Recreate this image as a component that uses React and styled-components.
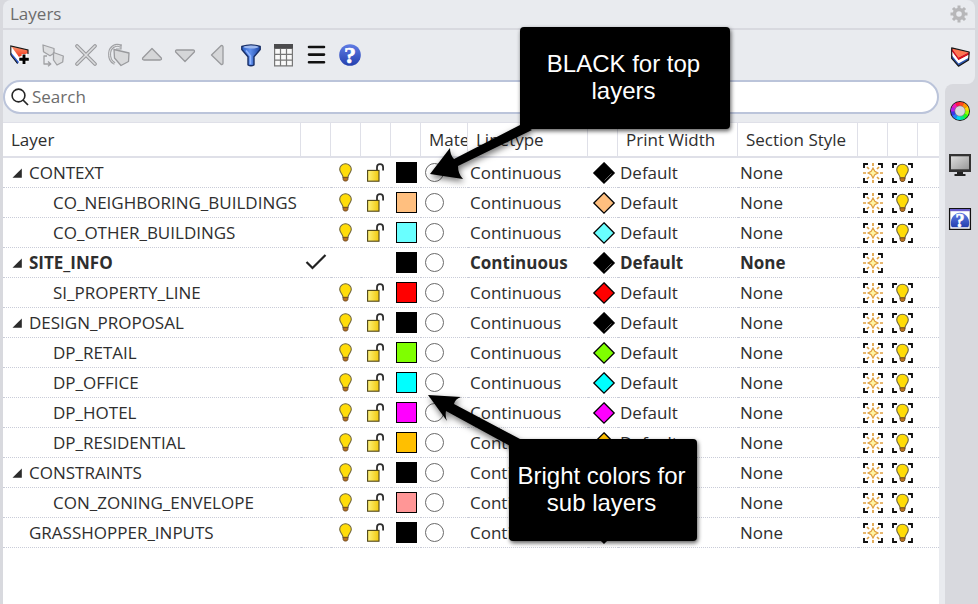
import React from "react";
import styled, { createGlobalStyle } from "styled-components";

const ink = "#2e2e2e";
const chrome = "#e9ebef";
const frame = "#d8d9de";

const GlobalStyle = createGlobalStyle`
  *, *::before, *::after { box-sizing: border-box; }
  body { margin: 0; background: ${frame}; color: ${ink}; font: 17px/24px "Open Sans", "Noto Sans", sans-serif; }
  button, input { font: inherit; color: inherit; }
`;

const Screen = styled.div`
  position: relative;
  min-height: 100vh;
  padding: 0 3px;
  display: flex;
  overflow: hidden;
`;

const Panel = styled.section`
  flex: 1;
  min-width: 0;
  display: flex;
  flex-direction: column;
  background: ${chrome};
  border-radius: 8px 8px 0 0;
`;

const TitleBar = styled.header`
  height: 30px;
  padding: 0 7px;
  display: flex;
  align-items: center;
  justify-content: space-between;
  border-bottom: 2px solid #d8d9df;
`;

const Title = styled.h1`
  margin: 0;
  font-size: 17px;
  font-weight: 400;
  line-height: 24px;
  color: #6c6c6c;
`;

const IconButton = styled.button`
  flex: none;
  width: ${(p) => p.$width || 33}px;
  height: ${(p) => p.$height || 30}px;
  padding: 0;
  border: 0;
  background: none;
  display: flex;
  align-items: center;
  justify-content: center;

  svg { display: block; overflow: visible; }
`;

const Body = styled.div`
  flex: 1;
  min-height: 0;
  display: flex;
`;

const Main = styled.main`
  flex: 1;
  min-width: 0;
  margin-right: 6px;
  display: flex;
  flex-direction: column;
`;

const Toolbar = styled.div`
  height: 50px;
  display: flex;
  align-items: center;
`;

const SearchBox = styled.label`
  height: 34px;
  margin-bottom: 8px;
  padding: 0 6px;
  display: flex;
  align-items: center;
  gap: 3px;
  background: #fff;
  border: 2px solid #bbc4da;
  border-radius: 17px;
`;

const SearchInput = styled.input`
  flex: 1;
  min-width: 0;
  padding: 0;
  border: 0;
  outline: 0;
  background: none;
  &::placeholder { color: #6c6c6c; opacity: 1; }
`;

const TableArea = styled.div`
  flex: 1;
  overflow: hidden;
  background: #fff;
  border-top: 1px solid #dfe0e8;
`;

const Table = styled.table`
  width: 100%;
  table-layout: fixed;
  border-collapse: separate;
  border-spacing: 0;
`;

const Col = styled.col`
  width: ${(p) => (p.$width ? `${p.$width}px` : "auto")};
`;

const HeadCell = styled.th`
  height: 35px;
  padding: 0 0 0 8px;
  font-weight: 400;
  text-align: left;
  white-space: nowrap;
  overflow: hidden;
  border-right: 1px solid #dfe0e8;
  border-bottom: 2px solid #dfe0e8;
  &:last-child { border-right: 0; }
`;

const Row = styled.tr`
  font-weight: ${(p) => (p.$current ? 700 : 400)};
`;

const Cell = styled.td`
  height: 30px;
  padding: 0 0 0 ${(p) => p.$pad || 0}px;
  line-height: 24px;
  white-space: nowrap;
  border-bottom: 1px dotted #c9ccd8;
`;

const LayerName = styled.div`
  display: flex;
  align-items: center;
  padding-left: ${(p) => (p.$child ? 50 : p.$leaf ? 26 : 6)}px;
`;

const Expander = styled(IconButton).attrs({ $width: 20, $height: 24 })`
  justify-content: flex-start;
  padding-left: 3px;
`;

const Swatch = styled.button`
  display: block;
  width: 21px;
  height: 21px;
  margin-left: 5px;
  padding: 0;
  border: 1px solid #000;
  background: ${(p) => p.$color};
`;

const Material = styled.button`
  display: block;
  width: 19px;
  height: 19px;
  margin-left: 4px;
  padding: 0;
  border: 1px solid #6a6a6a;
  border-radius: 50%;
  background: #fff;
`;

const SideTabs = styled.nav`
  flex: none;
  width: 30px;
`;

const ActiveSlot = styled.div`
  background: ${frame};
`;

const SideTab = styled(IconButton).attrs({ $width: 30, $height: 54 })`
  background: ${(p) => (p.$active ? chrome : "none")};
  border-radius: 0 0 8px 0;
`;

const IdleTabs = styled.div`
  height: calc(100% - 54px);
  background: ${frame};
  border-radius: 8px 0 0 0;
`;

const Arrows = styled.svg`
  position: absolute;
  left: 0;
  top: 0;
  pointer-events: none;
  filter: drop-shadow(1px 3px 3px rgba(0, 0, 0, 0.55));
`;

const Callout = styled.aside`
  position: absolute;
  left: ${(p) => p.$x}px;
  top: ${(p) => p.$y}px;
  width: ${(p) => p.$width}px;
  padding: 23px 6px 25px 3px;
  border-radius: 4px;
  background: #000;
  color: #fff;
  font: 24px/27px "Liberation Sans", Arial, sans-serif;
  text-align: center;
  box-shadow: 1px 2px 4px rgba(0, 0, 0, 0.65);
`;

const Glyph = styled.text`
  font: 700 ${(p) => p.$size}px "Liberation Serif", serif;
  text-anchor: middle;
  fill: #fff;
  stroke: #fff;
  stroke-width: 0.6px;
`;

const Icon = ({ w, h, children }) => (
  <svg width={w} height={h} viewBox={`0 0 ${w} ${h}`} fill="none" aria-hidden="true">
    {children}
  </svg>
);

const BulbShape = () => (
  <>
    <path
      d="M6.500.700C3.300.700.700 3.200.700 6.200c0 2.600 1.700 4 2.700 6 .5 1 .6 1.800.6 2.500h5c0-.7.1-1.500.6-2.500 1-2 2.700-3.400 2.700-6C12.300 3.200 9.700.700 6.500.700Z"
      fill="#ffdc08" stroke="#6f6642" strokeWidth="1.100"
    />
    <path d="M4.200 14.300h4.600v2.400L7.700 18H5.300l-1.100-1.300Z" fill="#b8741f" stroke="#69451f" strokeWidth=".9" />
  </>
);

const BulbIcon = () => <Icon w={13} h={19}><BulbShape /></Icon>;

const LockIcon = () => (
  <Icon w={17} h={19}>
    <path d="M10 7.500V4.300C10 2.300 11.300 1.100 13 1.100s3.100 1.200 3.100 3.200V7.500" stroke="#2e2e2e" strokeWidth="1.800" />
    <rect x=".6" y="7.400" width="11.400" height="10.800" fill="url(#lockFill)" stroke="#4d4417" strokeWidth="1.100" />
  </Icon>
);

const NewSunIcon = () => (
  <Icon w={20} h={20}>
    <path d="M1 5V1h4M15 1h4v4M19 15v4h-4M5 19H1v-4" stroke="#111" strokeWidth="1.900" />
    <path
      d="M10 0v3M10 17v3M0 10h3M17 10h3M4 4l2 2M14 14l2 2M16 4l-2 2M6 14l-2 2"
      stroke="#dfa040" strokeWidth="1.700"
    />
    <path d="M10 5 11.800 8.200 15 10 11.800 11.800 10 15 8.200 11.800 5 10 8.200 8.200Z" fill="#fff5a5" stroke="#dfa040" strokeWidth="1.200" />
  </Icon>
);

const NewBulbIcon = () => (
  <Icon w={21} h={20}>
    <path d="M1 5V1h4M16 1h4v4M20 15v4h-4M5 19H1v-4" stroke="#111" strokeWidth="1.900" />
    <g transform="translate(4 .500)"><BulbShape /></g>
  </Icon>
);

const CheckIcon = () => (
  <Icon w={22} h={18}>
    <path d="M1.500 8 7.500 14 20.500 1" stroke="#222" strokeWidth="2.200" />
  </Icon>
);

const DiamondIcon = ({ color }) => (
  <Icon w={22} h={22}>
    <path d="M12 .800 22.200 11 12 21.200 1.800 11Z" fill={color} stroke="#000" strokeWidth="1.300" />
    {color === "#000000" && <path d="m12.500 18.500 7-7" stroke="#777" strokeWidth=".8" />}
  </Icon>
);

const ExpanderIcon = () => <Icon w={10} h={10}><path d="M9.800.500v9.300H.500Z" fill="#2b2b2b" /></Icon>;

const GearIcon = () => (
  <Icon w={18} h={18}>
    <circle cx="9" cy="9" r="4.500" stroke="#b7b7b9" strokeWidth="3.400" />
    {[0, 45, 90, 135].map((a) => (
      <path key={a} d="M9 .500v3M9 14.500v3" stroke="#b7b7b9" strokeWidth="3" transform={`rotate(${a} 9 9)`} />
    ))}
  </Icon>
);

const NewLayerIcon = () => (
  <Icon w={20} h={20}>
    <path d="M1 1v8l6.500 9.500L17 13V5Z" fill="#fff" />
    <path d="M1 1 18 5v3L9 12Z" fill="url(#redFill)" />
    <path d="M1 7.500 9 17l-1.500 2L1 10Z" fill="#315ed0" />
    <path d="M.800 10V1l17.200 4v4M.800 10l6.700 8.500" stroke="#151515" strokeWidth="1.100" />
    <path d="M14 9v10M9 14h10" stroke="#fff" strokeWidth="4.600" />
    <path d="M14 9.500v9.500M9.300 14.200h9.500" stroke="#000" strokeWidth="2.900" />
  </Icon>
);

const SubLayerIcon = () => (
  <Icon w={22} h={22}>
    <g stroke="#a0a1a4" strokeWidth="1.300" fill="#dedfe1" strokeLinejoin="round">
      <path d="m1 1 11 3.500v4.800l-4 2.500-6.500-4Z" />
      <path d="m11.500 8.500 9.800 3.500-.6 6-5.700 3-3.500-5Z" />
      <path d="M5 12H2v8h6M6 17.500 8.800 20 6 22.300" fill="none" />
    </g>
  </Icon>
);

const DeleteIcon = () => (
  <Icon w={22} h={22}>
    <path d="m2 2 18 18M20 2 2 20" stroke="#999a9d" strokeWidth="3.800" strokeLinecap="round" />
    <path d="m2 2 18 18M20 2 2 20" stroke="#dcdddf" strokeWidth="1.600" strokeLinecap="round" />
  </Icon>
);

const DuplicateIcon = () => (
  <Icon w={22} h={22}>
    <path d="M13 2.500C8-.500 2 3 1.600 9c-.4 5 1.800 9 5.200 10.500" stroke="#a0a1a4" strokeWidth="3" />
    <path d="M13 2.500C8-.500 2 3 1.600 9c-.4 5 1.800 9 5.200 10.500" stroke="#e1e2e4" strokeWidth="1" />
    <path d="M13 0v5H8" stroke="#a0a1a4" strokeWidth="1.200" />
    <path d="m6 5.500 15 3.500-.5 8.500-7.500 4-6.500-7.500Z" fill="#d8d9db" stroke="#999a9d" strokeWidth="1.300" strokeLinejoin="round" />
  </Icon>
);

const TriangleIcon = ({ angle }) => (
  <Icon w={20} h={20}>
    <path d="M10 3.500 19.300 13Q20 15 18 15H2Q0 15 .700 13Z" fill="#d5d6d8" stroke="#999a9d" strokeWidth="1.300" strokeLinejoin="round" transform={`rotate(${angle} 10 10)`} />
  </Icon>
);

const FilterIcon = () => (
  <Icon w={20} h={23}>
    <path d="M.800 2.500Q10-.500 19.200 2.500v3l-6.200 7.300v8q-3 2-6 0v-8L.800 5.500Z" fill="url(#funnelFill)" stroke="#182e66" strokeWidth="1.400" strokeLinejoin="round" />
    <ellipse cx="10" cy="3" rx="7.600" ry="1.500" fill="#9db8ee" />
    <path d="m5 6.500 4.500 5.500v8" stroke="#93b6ff" strokeWidth="1.500" />
  </Icon>
);

const GridIcon = () => (
  <Icon w={19} h={23}>
    <path d="M.600.600h17.800v21.300H.600Z" fill="#f9f9f9" stroke="#777" strokeWidth="1.200" />
    <path d="M.600 4.500h17.800M.600 10.300h17.800M.600 16.200h17.800M6.500 4v18M12.500 4v18" stroke="#777" strokeWidth="1.200" />
    <path d="M0 0h19v4.500H0Z" fill="#4b4b4d" />
  </Icon>
);

const MenuIcon = () => (
  <Icon w={20} h={20}>
    <path d="M2 2h15M2 9.600h15M2 17.200h15" stroke="#111" strokeWidth="2.600" strokeLinecap="round" />
  </Icon>
);

const HelpIcon = () => (
  <Icon w={22} h={22}>
    <circle cx="11" cy="11" r="10.800" fill="url(#helpFill)" />
    <Glyph $size={24} x="11" y="19">?</Glyph>
  </Icon>
);

const SearchIcon = () => (
  <Icon w={18} h={18}>
    <circle cx="7.500" cy="7.500" r="6.400" stroke="#252525" strokeWidth="1.600" />
    <path d="m12 12 5 5" stroke="#252525" strokeWidth="1.700" />
  </Icon>
);

const LayersTabIcon = () => (
  <Icon w={19} h={20}>
    <path d="M.700.900 18.200 5 7.500 10.500Z" fill="#ff7650" />
    <path d="M.700.900v3.300l6.800 9L18 7.700 18.200 5 7.500 10.500Z" fill="#d5141c" />
    <path d="M.700 4.200v4l6.800 8.300 10.300-5.700.2-3.100-10.500 5.500Z" fill="#fff" />
    <path d="M.700 8.200v3.200l6.800 7.800 10.100-6.200.2-2.200-10.300 5.700Z" fill="#2d57b0" />
    <path d="M.700.900 18.200 5l-.6 8-10.100 6.200L.700 11.400Z" stroke="#151515" strokeWidth="1.200" strokeLinejoin="round" />
  </Icon>
);

const hues = ["#ffd800", "#95ff00", "#20f520", "#00e98b", "#00d9ed", "#247ef6", "#3c35e9", "#b61ee6", "#f01bb5", "#ff164d", "#ff481f", "#ff9600"];
const WheelIcon = () => (
  <Icon w={20} h={20}>
    <circle cx="10" cy="10" r="10" fill="#181818" />
    {hues.map((c, i) => (
      <path key={c} d="M10 10 12.700 1.300A9.100 9.100 0 0 1 17.100 4.300Z" fill={c} transform={`rotate(${i * 30 + 40} 10 10)`} />
    ))}
    <circle cx="10" cy="10" r="5.200" fill={frame} stroke="#666" strokeWidth=".5" />
  </Icon>
);

const MonitorIcon = () => (
  <Icon w={22} h={22}>
    <path d="M0 0h22v18H0Z" fill="#333" />
    <path d="M2 2.300h18v13H2Z" fill="url(#screenFill)" />
    <path d="M8 18h6v2h2.500v2h-11v-2H8Z" fill="#222" />
  </Icon>
);

const HelpWindowIcon = () => (
  <Icon w={22} h={22}>
    <path d="M.600.600h20.800v20.800H.600Z" fill="#fff" stroke="#111" strokeWidth="1.300" />
    <path d="M1 1h20v2.200H1Z" fill="#6a5ccb" />
    <path d="M2.700 19.200C1.300 16.500 1.500 12 3.500 9 7.500 3.300 14.500 3.300 18.500 9c2 3 2.200 7.500.8 10.200Z" fill="url(#helpFill)" />
    <Glyph $size={18} x="11" y="18.500">?</Glyph>
  </Icon>
);

const Gradients = () => (
  <defs>
    <linearGradient id="lockFill"><stop stopColor="#fff37c" /><stop offset="1" stopColor="#f1c80c" /></linearGradient>
    <linearGradient id="redFill" x1="0" y1="0" x2="0" y2="1"><stop stopColor="#ff9971" /><stop offset="1" stopColor="#ed351b" /></linearGradient>
    <linearGradient id="funnelFill"><stop stopColor="#2d62c6" /><stop offset=".45" stopColor="#5f8fec" /><stop offset="1" stopColor="#1f48a8" /></linearGradient>
    <linearGradient id="helpFill" x1="0" y1="0" x2="0" y2="1"><stop stopColor="#607ce4" /><stop offset="1" stopColor="#2440af" /></linearGradient>
    <linearGradient id="screenFill" x1="0" y1="0" x2="1" y2="1"><stop stopColor="#dedede" /><stop offset="1" stopColor="#999" /></linearGradient>
  </defs>
);

const tools = [
  ["New layer", <NewLayerIcon />],
  ["New sublayer", <SubLayerIcon />],
  ["Delete layer", <DeleteIcon />],
  ["Duplicate layer", <DuplicateIcon />],
  ["Move up", <TriangleIcon angle={0} />],
  ["Move down", <TriangleIcon angle={180} />],
  ["Move out", <TriangleIcon angle={-90} />],
  ["Filter", <FilterIcon />],
  ["Columns", <GridIcon />],
  ["Menu", <MenuIcon />],
  ["Help", <HelpIcon />],
];

const columns = [
  ["Layer", 298], ["", 30], ["", 30], ["", 30], ["", 30], ["Material", 47], ["Linetype", 120],
  ["", 30], ["Print Width", 120], ["Section Style", 120], ["", 30], ["", 30], ["", 0],
];

const layers = [
  { name: "CONTEXT", color: "#000000" },
  { name: "CO_NEIGHBORING_BUILDINGS", color: "#ffbf7f", child: true },
  { name: "CO_OTHER_BUILDINGS", color: "#69ffff", child: true },
  { name: "SITE_INFO", color: "#000000", current: true },
  { name: "SI_PROPERTY_LINE", color: "#ff0000", child: true },
  { name: "DESIGN_PROPOSAL", color: "#000000" },
  { name: "DP_RETAIL", color: "#7fff00", child: true },
  { name: "DP_OFFICE", color: "#00ffff", child: true },
  { name: "DP_HOTEL", color: "#ff00ff", child: true },
  { name: "DP_RESIDENTIAL", color: "#ffbf00", child: true },
  { name: "CONSTRAINTS", color: "#000000" },
  { name: "CON_ZONING_ENVELOPE", color: "#ff9696", child: true },
  { name: "GRASSHOPPER_INPUTS", color: "#000000", leaf: true },
];

const Action = ({ label, children }) => (
  <IconButton $width={29} $height={24} aria-label={label}>{children}</IconButton>
);

function LayerRow({ layer }) {
  const { name, color, child, leaf, current } = layer;
  return (
    <Row $current={current}>
      <Cell>
        <LayerName $child={child} $leaf={leaf}>
          {!child && !leaf && <Expander aria-label={`Collapse ${name}`}><ExpanderIcon /></Expander>}
          {name}
        </LayerName>
      </Cell>
      <Cell>{current && <Action label="Current layer"><CheckIcon /></Action>}</Cell>
      <Cell>{!current && <Action label="Toggle visibility"><BulbIcon /></Action>}</Cell>
      <Cell>{!current && <Action label="Toggle lock"><LockIcon /></Action>}</Cell>
      <Cell><Swatch $color={color} aria-label={`${name} color`} /></Cell>
      <Cell><Material aria-label={`${name} material`} /></Cell>
      <Cell $pad={2}>Continuous</Cell>
      <Cell><Action label="Print color"><DiamondIcon color={color} /></Action></Cell>
      <Cell $pad={2}>Default</Cell>
      <Cell $pad={2}>None</Cell>
      <Cell><Action label="New detail on"><NewSunIcon /></Action></Cell>
      <Cell>{!current && <Action label="Detail visibility"><NewBulbIcon /></Action>}</Cell>
      <Cell />
    </Row>
  );
}

export default function App() {
  return (
    <>
      <GlobalStyle />
      <Screen>
        <Panel>
          <TitleBar>
            <Title>Layers</Title>
            <IconButton $width={18} $height={24} aria-label="Panel options"><GearIcon /></IconButton>
          </TitleBar>
          <Body>
            <Main>
              <Toolbar role="toolbar" aria-label="Layer tools">
                {tools.map(([label, icon]) => <IconButton key={label} aria-label={label}>{icon}</IconButton>)}
              </Toolbar>
              <SearchBox>
                <SearchIcon />
                <SearchInput type="text" placeholder="Search" aria-label="Search" />
              </SearchBox>
              <TableArea>
                <Table>
                  <colgroup>{columns.map(([, width], i) => <Col key={i} $width={width} />)}</colgroup>
                  <thead>
                    <tr>{columns.map(([label], i) => <HeadCell key={i} scope="col">{label}</HeadCell>)}</tr>
                  </thead>
                  <tbody>{layers.map((layer) => <LayerRow key={layer.name} layer={layer} />)}</tbody>
                </Table>
              </TableArea>
            </Main>
            <SideTabs aria-label="Panels">
              <ActiveSlot><SideTab $active aria-label="Layers"><LayersTabIcon /></SideTab></ActiveSlot>
              <IdleTabs>
                <SideTab aria-label="Materials"><WheelIcon /></SideTab>
                <SideTab aria-label="Display"><MonitorIcon /></SideTab>
                <SideTab aria-label="Help"><HelpWindowIcon /></SideTab>
              </IdleTabs>
            </SideTabs>
          </Body>
        </Panel>
        <Arrows width="740" height="560" viewBox="0 0 740 560" aria-hidden="true">
          <Gradients />
          <path d="M430 174 450 148Q450 155 454 159L522 124 532 130 458 166Q458 174 463 179Z" fill="#000" />
          <path d="M428 395 461 397Q455 399 454 404L520 439 512 447 446 411Q445 416 447 421Z" fill="#000" />
        </Arrows>
        <Callout $x={520} $y={27} $width={210}>BLACK for top layers</Callout>
        <Callout $x={509} $y={439} $width={188}>Bright colors for sub layers</Callout>
      </Screen>
    </>
  );
}
